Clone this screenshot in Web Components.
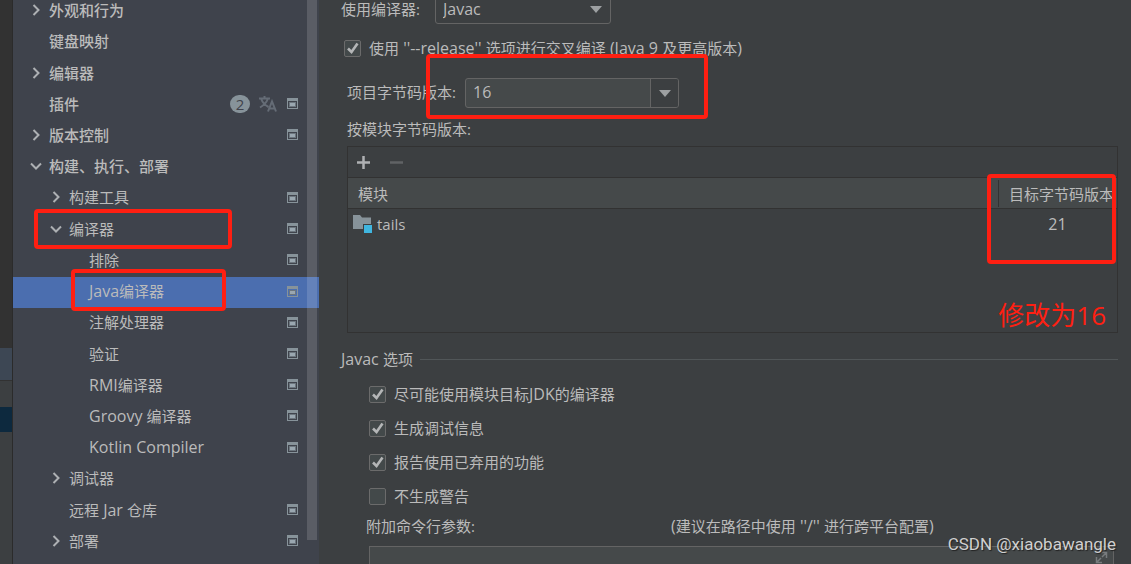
<!DOCTYPE html>
<html lang="zh-CN">
<head>
<meta charset="utf-8">
<title>Java编译器 - 设置</title>
<style>
  html, body { margin: 0; min-height: 100%; background: #3c3f41; }
  body { font: 15px/20px "Open Sans", "Noto Sans CJK SC", sans-serif; color: #bbbbbb; overflow: hidden; }
</style>
</head>
<body>
<settings-window></settings-window>

<script>
const define = (name, html, setup) => {
  const tpl = document.createElement('template');
  tpl.innerHTML = html;
  customElements.define(name, class extends HTMLElement {
    connectedCallback() {
      if (this.shadowRoot) return;
      const root = this.attachShadow({ mode: 'open' });
      root.append(tpl.content.cloneNode(true));
      if (setup) setup(root, this);
    }
  });
};

/* Latin runs are set one size up so they balance the Chinese glyphs. */
define('latin-text', `<style>:host { font-size: 16px; }</style><slot></slot>`);

/* Red annotation frame; position comes from the element that holds it. */
define('mark-frame', `
<style>
  :host { display: block; position: absolute; box-sizing: border-box; z-index: 3;
    border: 4px solid #ff1f12; border-radius: 4px; pointer-events: none; }
</style>`);

define('editor-edge', `
<style>
  :host { display: flex; flex-direction: column; width: 12px; flex: none; border-right: 1px solid #2b2b2b; background: #3c3f41; }
  .gutter { height: 348px; background: #323232; }
  .tab { height: 32px; background: #3d4754; border-bottom: 1px solid #323232; }
  .space { height: 26px; }
  .sel { height: 25px; background: #0d293e; }
</style>
<div class="gutter"></div><div class="tab"></div><div class="space"></div><div class="sel"></div>`);

define('tree-row', `
<style>
  :host { display: flex; align-items: center; position: relative; box-sizing: border-box; padding-right: 21px; padding-bottom: 3px;
    padding-left: calc(15px + var(--depth, 0) * 20px); }
  :host([top]) .text { font-weight: 500; }
  :host([selected]) { background: #4b6eaf; }
  .chev { width: 16px; height: 16px; margin-right: 5px; flex: none; }
  .chev path { display: none; fill: none; stroke: #adb0b3; stroke-width: 2; }
  :host([state="closed"]) .c, :host([state="open"]) .o { display: inline; }
  .text { flex: 1; white-space: nowrap; }
  .proj { display: none; flex: none; }
  :host([project]) .proj { display: block; }
</style>
<svg class="chev" viewBox="0 0 16 16"><path class="c" d="M5.5 3 10.5 8 5.5 13"/><path class="o" d="M3 5.5 8 10.5 13 5.5"/></svg>
<span class="text"><slot></slot></span>
<slot name="extra"></slot>
<svg class="proj" width="11" height="11" viewBox="0 0 11 11"><path fill="#87939a" fill-rule="evenodd" d="M0 0H11V11H0ZM1 3V10H10V3Z"/><path fill="#6c767e" d="M2 4H9V9H2Z"/><path fill="#9aa7b0" d="M3 5H8V8H3Z"/></svg>
<slot name="mark"></slot>`, (root, host) => {
  host.style.setProperty('--depth', host.getAttribute('depth') || 0);
});

define('plugin-status', `
<style>
  :host { display: flex; align-items: center; gap: 9px; margin-right: 10px; }
  .count { width: 20px; height: 18px; border-radius: 9px; background: #87939a; color: #3f434c; text-align: center; line-height: 19px; }
</style>
<span class="count">2</span>
<svg width="18" height="18" viewBox="0 0 18 18" fill="none" stroke="#656c76" stroke-width="2"><path d="M0 3.5H11M5.5 1V3.5M2 3.5Q4 9 9.5 12M9 3.5Q7 9 1 12.500M9 16.500 13 6.500 17 16.500M10.500 13.500H15.500"/></svg>`);

define('settings-tree', `
<style>
  :host { display: flex; position: relative; flex: 0 0 306px; background: #3f434c; overflow: hidden; }
  nav { flex: 1; display: grid; grid-auto-rows: minmax(31px, 1fr); margin: -4px 0 6px; }
  .thumb { position: absolute; top: 0; right: 2px; width: 10px; bottom: 24px; background: rgba(255,255,255,.14); }
  .a { left: 21px; width: 198px; top: -6px; height: 40px; }
  .b { left: 58px; width: 155px; top: -8px; height: 42px; }
</style>
<nav aria-label="设置">
  <tree-row top state="closed">外观和行为</tree-row>
  <tree-row top>键盘映射</tree-row>
  <tree-row top state="closed">编辑器</tree-row>
  <tree-row top project>插件<plugin-status slot="extra"></plugin-status></tree-row>
  <tree-row top state="closed" project>版本控制</tree-row>
  <tree-row top state="open">构建、执行、部署</tree-row>
  <tree-row depth="1" state="closed" project>构建工具</tree-row>
  <tree-row depth="1" state="open" project>编译器<mark-frame slot="mark" class="a"></mark-frame></tree-row>
  <tree-row depth="2" project>排除</tree-row>
  <tree-row depth="2" selected project><latin-text>Java</latin-text>编译器<mark-frame slot="mark" class="b"></mark-frame></tree-row>
  <tree-row depth="2" project>注解处理器</tree-row>
  <tree-row depth="2" project>验证</tree-row>
  <tree-row depth="2" project><latin-text>RMI</latin-text>编译器</tree-row>
  <tree-row depth="2" project><latin-text>Groovy </latin-text>编译器</tree-row>
  <tree-row depth="2" project><latin-text>Kotlin Compiler</latin-text></tree-row>
  <tree-row depth="1" state="closed">调试器</tree-row>
  <tree-row depth="1" project>远程<latin-text> Jar </latin-text>仓库</tree-row>
  <tree-row depth="1" state="closed" project>部署</tree-row>
</nav>
<div class="thumb"></div>`);

define('check-option', `
<style>
  :host { display: block; }
  label { display: flex; align-items: center; gap: 8px; white-space: nowrap; }
  input { appearance: none; box-sizing: border-box; width: 17px; height: 17px; margin: 0; border: 1px solid #6b6b6b; border-radius: 2px; background: #43494a; }
  .box { display: grid; flex: none; }
  .box > * { grid-area: 1 / 1; }
  svg { display: none; pointer-events: none; }
  input:checked + svg { display: block; }
</style>
<label><span class="box"><input type="checkbox"><svg width="17" height="17" viewBox="0 0 17 17"><path d="M4 8.500 7.500 12 13.500 3.500" fill="none" stroke="#b4b6b7" stroke-width="2.600"/></svg></span><span><slot></slot></span></label>`,
(root, host) => { root.querySelector('input').checked = host.hasAttribute('checked'); });

define('compiler-select', `
<style>
  :host { display: flex; align-items: center; }
  label { width: 94px; flex: none; }
  .wrap { display: grid; width: 176px; align-items: center; }
  .wrap > * { grid-area: 1 / 1; }
  select { appearance: none; height: 30px; box-sizing: border-box; padding: 0 7px; font: inherit; font-size: 16px; color: inherit; background: #3c3f41; border: 1px solid #646464; border-radius: 3px; }
  svg { justify-self: end; margin-right: 9px; pointer-events: none; }
</style>
<label for="s">使用编译器:</label>
<span class="wrap"><select id="s"><option>Javac</option><option>Eclipse</option></select>
<svg width="12" height="7"><path d="M0 0H12L6 7Z" fill="#9da0a2"/></svg></span>`);

define('version-combo', `
<style>
  :host { display: flex; align-items: center; padding-left: 6px; }
  label { width: 118px; flex: none; padding-bottom: 2px; }
  .combo { position: relative; display: flex; width: 214px; height: 30px; box-sizing: border-box; border: 1px solid #646464; border-radius: 3px; background: #45494a; }
  input { flex: 1; min-width: 0; border: 0; background: none; padding: 0 7px 2px; font: inherit; font-size: 16px; color: inherit; }
  button { width: 28px; padding: 0; display: grid; place-items: center; border: 0; border-left: 1px solid #646464; background: #3c3f41; border-radius: 0 2px 2px 0; }
  mark-frame { left: -40px; right: -30px; top: -25px; bottom: -12px; }
</style>
<label for="v">项目字节码版本:</label>
<span class="combo"><input id="v" value="16"><button type="button" aria-label="展开"><svg width="12" height="7"><path d="M0 0H12L6 7Z" fill="#9da0a2"/></svg></button><mark-frame></mark-frame></span>`);

define('module-table', `
<style>
  :host { display: block; position: relative; margin-left: 6px; border: 1px solid #323232; min-height: 185px; }
  .tools { display: flex; gap: 18px; align-items: center; height: 30px; padding-left: 8px; border-bottom: 1px solid #323232; }
  button { border: 0; padding: 0; width: 15px; height: 15px; background: none; display: grid; place-items: center; }
  table { width: 100%; border-collapse: separate; border-spacing: 0; table-layout: fixed; }
  th { font-weight: 400; text-align: left; height: 28px; padding: 2px 0 0 10px; background: #45494a; border-bottom: 1px solid #323232; white-space: nowrap; overflow: hidden; }
  th:last-child { width: 108px; padding-left: 11px; background: linear-gradient(#323232, #323232) 0 2px / 1px 27px no-repeat #45494a; }
  td { height: 29px; padding: 0 0 2px 5px; }
  td:last-child { text-align: center; padding: 0 0 2px; }
  .mod { display: flex; align-items: center; gap: 5px; }
  mark-frame { right: 1px; top: 27px; width: 129px; height: 90px; }
  .note { position: absolute; right: 11px; top: 150px; font-size: 26px; line-height: 36px; color: #ff1f12; }
</style>
<div class="tools">
  <button type="button" aria-label="添加"><svg width="13" height="13"><path d="M6.500 0V13M0 6.500H13" stroke="#afb1b3" stroke-width="2.500"/></svg></button>
  <button type="button" aria-label="移除" disabled><svg width="13" height="13"><path d="M0 6.500H13" stroke="#606365" stroke-width="2.500"/></svg></button>
</div>
<table>
  <thead><tr><th>模块</th><th>目标字节码版本</th></tr></thead>
  <tbody><tr><td><span class="mod"><svg width="19" height="18"><path d="M0 0H7L9 2.500H18V14H0Z" fill="#87939a"/><path d="M10 9H19V18H10Z" fill="#3c3f41"/><path d="M11 10H19V18H11Z" fill="#40b6e0"/></svg>tails</span></td><td><latin-text>21</latin-text></td></tr></tbody>
</table>
<mark-frame></mark-frame>
<span class="note">修改为16</span>`);

define('javac-options', `
<style>
  :host { display: block; }
  h2 { display: flex; align-items: center; gap: 7px; margin: 0; font: inherit; }
  h2::after { content: ""; flex: 1; height: 1px; background: #515658; }
  .list { display: grid; grid-auto-rows: 20px; gap: 14px; padding: 15px 0 0 28px; }
  .args { display: flex; margin: 10px 0; padding-left: 25px; }
  .args label { width: 305px; }
  .field { position: relative; margin: 0 4px 0 28px; }
  input { display: block; box-sizing: border-box; width: 100%; height: 30px; border: 1px solid #646464; background: #45494a; color: inherit; font: inherit; padding: 0 28px 0 7px; }
  svg { position: absolute; right: 6px; top: 5px; }
</style>
<h2><span><latin-text>Javac </latin-text>选项</span></h2>
<div class="list">
  <check-option checked>尽可能使用模块目标<latin-text>JDK</latin-text>的编译器</check-option>
  <check-option checked>生成调试信息</check-option>
  <check-option checked>报告使用已弃用的功能</check-option>
  <check-option>不生成警告</check-option>
</div>
<div class="args"><label for="a">附加命令行参数:</label><span><latin-text>(</latin-text>建议在路径中使用<latin-text> ''/'' </latin-text>进行跨平台配置<latin-text>)</latin-text></span></div>
<div class="field"><input id="a"><svg width="13" height="13" fill="none" stroke="#777b7d" stroke-width="1.500"><path d="M6 1.500H11.500V7M11 2 7 6M1.500 6V11.500H7M2 11 6 7"/></svg></div>`);

define('compiler-page', `
<style>
  :host { display: block; flex: 1; min-width: 0; padding: 0 13px 0 22px; }
  compiler-select { margin-top: -6px; }
  .release { padding: 14px 0 0 3px; }
  version-combo { margin-top: 20px; }
  .caption { margin: 11px 0 7px; padding-left: 6px; }
  javac-options { margin-top: 16px; }
</style>
<compiler-select></compiler-select>
<check-option class="release" checked>使用<latin-text> ''--release'' </latin-text>选项进行交叉编译<latin-text> (Java 9 </latin-text>及更高版本<latin-text>)</latin-text></check-option>
<version-combo></version-combo>
<div class="caption">按模块字节码版本:</div>
<module-table></module-table>
<javac-options></javac-options>`);

define('settings-window', `
<style>
  :host { display: flex; position: relative; height: 100vh; overflow: hidden; }
  .credit { position: absolute; right: 15px; bottom: 10px; font: 17px/20px Roboto, "Liberation Sans", sans-serif; color: #d0d0d0; text-shadow: 1px 1px 1px #222; }
</style>
<editor-edge></editor-edge>
<settings-tree></settings-tree>
<compiler-page></compiler-page>
<span class="credit">CSDN @xiaobawangle</span>`);
</script>
</body>
</html>
